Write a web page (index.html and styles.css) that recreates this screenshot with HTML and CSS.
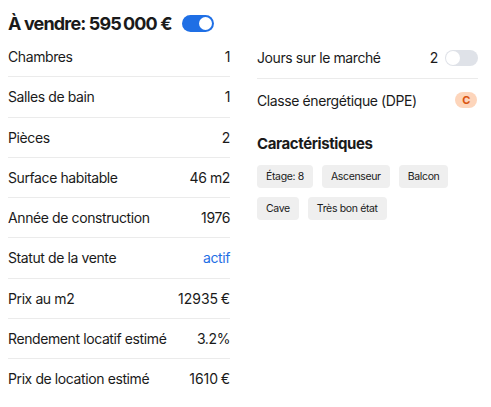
FILE: index.html
```html
<!DOCTYPE html>
<html lang="fr">
<head>
  <meta charset="UTF-8" />
  <title>Annonce</title>
  <link rel="stylesheet" href="styles.css">
</head>
<body>
  <div class="page">
    <div class="header">
      <h1>À vendre: 595&#8239;000&nbsp;€</h1>
      <span class="toggle on"><span class="knob"></span></span>
    </div>

    <div class="columns">
      <div class="details">
        <div class="row"><span>Chambres</span><span>1</span></div>
        <div class="row"><span>Salles de bain</span><span>1</span></div>
        <div class="row"><span>Pièces</span><span>2</span></div>
        <div class="row"><span>Surface habitable</span><span>46 m2</span></div>
        <div class="row"><span>Année de construction</span><span>1976</span></div>
        <div class="row"><span>Statut de la vente</span><span class="status">actif</span></div>
        <div class="row"><span>Prix au m2</span><span class="num">12935&#8239;€</span></div>
        <div class="row"><span>Rendement locatif estimé</span><span>3.2%</span></div>
        <div class="row last"><span>Prix de location estimé</span><span class="num">1610&#8239;€</span></div>
      </div>

      <div class="side">
        <div class="row market">
          <span>Jours sur le marché</span>
          <span class="value-group">2 <span class="toggle off"><span class="knob"></span></span></span>
        </div>
        <div class="row last">
          <span>Classe énergétique (DPE)</span>
          <span class="badge">C</span>
        </div>

        <h3>Caractéristiques</h3>
        <div class="tags">
          <span class="tag">Étage: 8</span>
          <span class="tag">Ascenseur</span>
          <span class="tag">Balcon</span>
          <span class="tag">Cave</span>
          <span class="tag">Très bon état</span>
        </div>
      </div>
    </div>
  </div>
</body>
</html>
```

FILE: styles.css
```css
body {
  margin: 0;
  font-family: Inter, "Noto Sans", sans-serif;
  color: #1a1a1a;
  background: white;
}

.page {
  padding: 10px 13px 0 8px;
}

.header {
  display: flex;
  align-items: center;
  gap: 10px;
  height: 26px;
}

h1 {
  margin: 0;
  font-size: 18px;
  font-weight: 700;
  letter-spacing: -0.85px;
}

.toggle {
  display: inline-flex;
  align-items: center;
  box-sizing: border-box;
  border-radius: 10px;
  padding: 0 2px;
}

.toggle .knob {
  width: 13px;
  height: 13px;
  border-radius: 50%;
  background: white;
}

.toggle.on {
  width: 32px;
  height: 17px;
  background: #1f6fe5;
  justify-content: flex-end;
}

.toggle.off {
  width: 33px;
  height: 16px;
  background: #dfe2e8;
  padding: 0 1px;
}

.toggle.off .knob {
  width: 14px;
  height: 14px;
}

.columns {
  display: grid;
  grid-template-columns: 222px 1fr;
  gap: 27px;
  margin-top: 1px;
}

.row {
  display: flex;
  justify-content: space-between;
  align-items: center;
  height: 39.25px;
  border-bottom: 1px solid #ebebeb;
  font-size: 14px;
  letter-spacing: -0.4px;
}

.row.last {
  border-bottom: none;
}

.num {
  letter-spacing: -0.6px;
}

.status {
  color: #1f6fe5;
}

.side .row.market {
  height: 41px;
}

.side .row {
  height: 42px;
}

.value-group {
  display: flex;
  align-items: center;
  gap: 7px;
}

.badge {
  background: #fdd5bb;
  color: #d9530f;
  font-size: 11px;
  font-weight: 700;
  line-height: 14px;
  border-radius: 8px;
  padding: 1px 7px;
  margin-right: 1px;
}

h3 {
  margin: 13px 0 12px;
  font-size: 15px;
  font-weight: 700;
  letter-spacing: -0.4px;
}

.tags {
  display: flex;
  flex-wrap: wrap;
  gap: 9px;
}

.tag {
  background: #efefef;
  border-radius: 4px;
  padding: 5px 9px;
  line-height: 13px;
  font-size: 10.5px;
  letter-spacing: -0.35px;
}
```
